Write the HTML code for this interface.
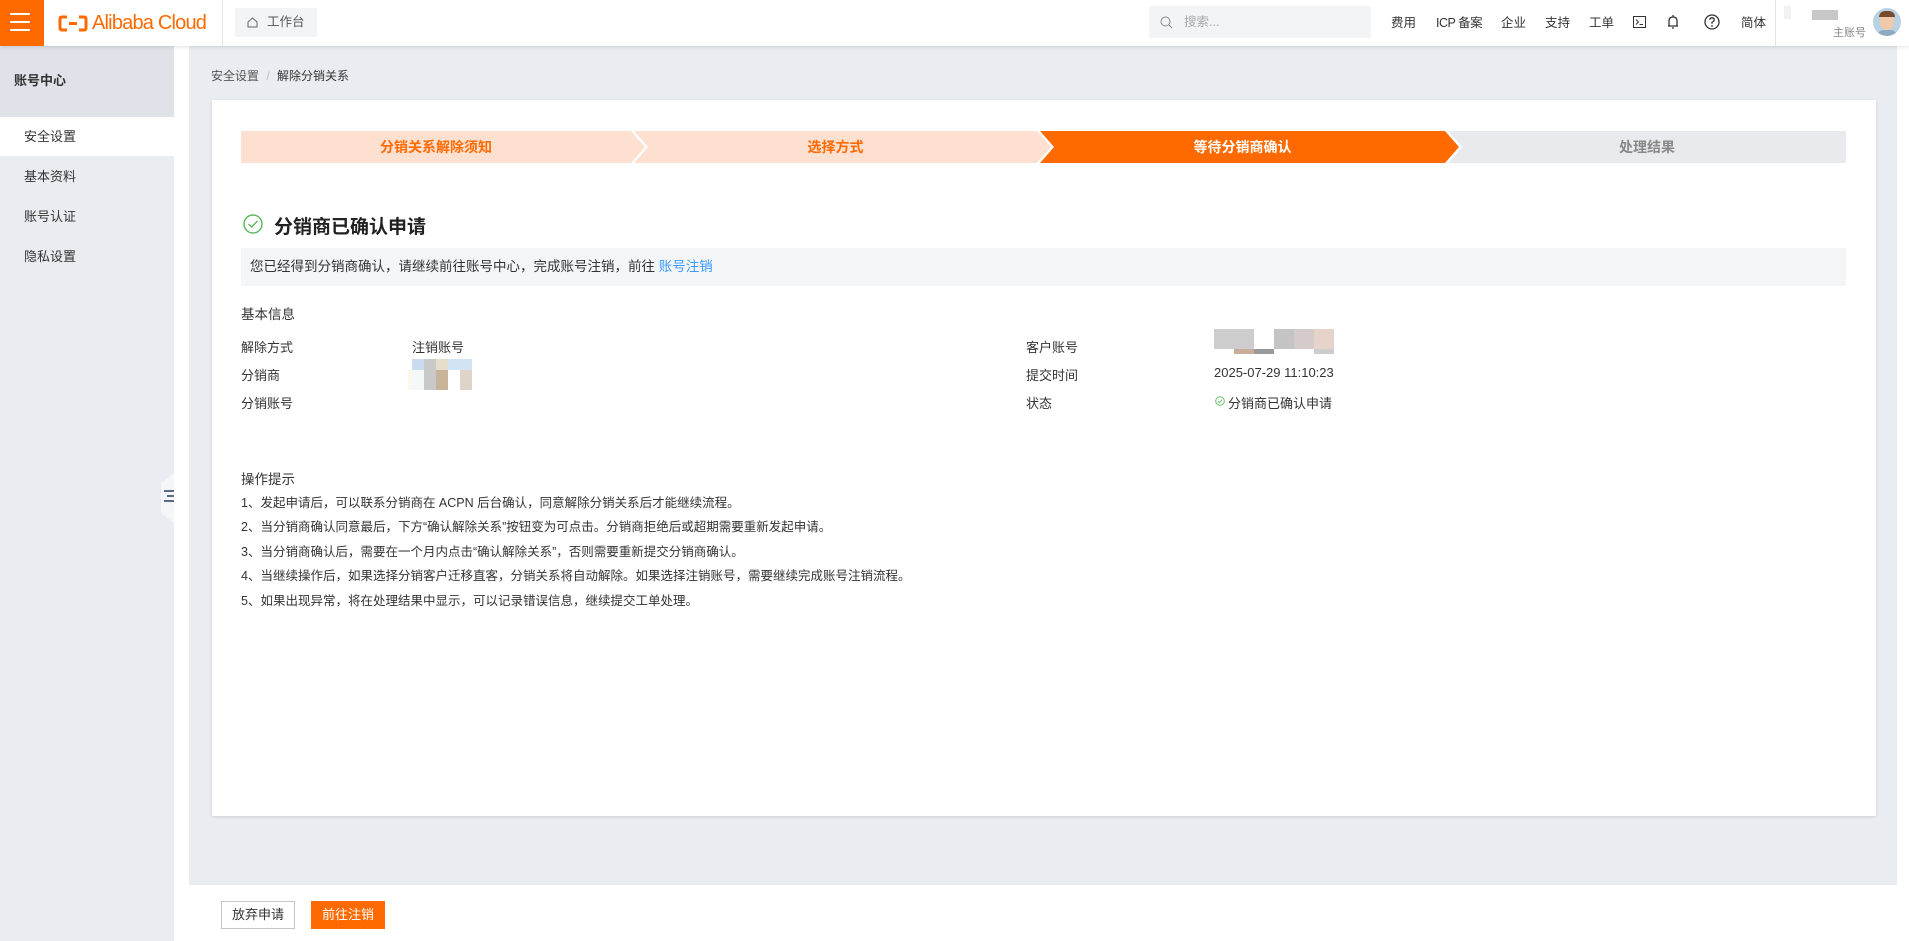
<!DOCTYPE html>
<html><head><meta charset="utf-8"><style>
*{box-sizing:border-box;margin:0;padding:0}
body{width:1909px;height:941px;overflow:hidden;position:relative;background:#fff;font-family:"Liberation Sans","Noto Sans CJK SC",sans-serif;color:#333;font-size:13px}
.a{position:absolute}
.hdr{left:0;top:0;width:1909px;height:46px;background:#fff;box-shadow:0 1px 4px rgba(0,0,0,.12);z-index:5}
.nav{top:0;height:46px;line-height:46px;font-size:12.5px;color:#333;white-space:nowrap}
.side{left:0;top:46px;width:174px;height:895px;background:#e9ecf1}
.sitem{left:0;width:174px;height:40px;line-height:40px;padding-left:24px;font-size:13px;color:#333}
.step{top:131px;height:32px;line-height:32px;text-align:center;font-size:14px;font-weight:bold}
.lbl{font-size:13px;color:#333}
.tip{left:241px;font-size:12.5px;color:#333}
</style></head><body>
<div class="a hdr">
 <div class="a" style="left:0;top:0;width:44px;height:46px;background:#ff6a00">
  <div class="a" style="left:10px;top:13px;width:20px;height:2px;background:#fff"></div>
  <div class="a" style="left:10px;top:21px;width:20px;height:2px;background:#fff"></div>
  <div class="a" style="left:10px;top:29px;width:20px;height:2px;background:#fff"></div>
 </div>
 <svg class="a" style="left:58px;top:15px" width="30" height="17" viewBox="0 0 30 17"><path d="M9 2H4Q2 2 2 4V13Q2 15 4 15H9M21 2H26Q28 2 28 4V13Q28 15 26 15H21M11 8.5H19" fill="none" stroke="#ff6a00" stroke-width="3"/></svg>
 <div class="a" style="left:92px;top:9px;font-size:20px;color:#ff6a00;letter-spacing:-0.8px;line-height:28px">Alibaba Cloud</div>
 <div class="a" style="left:222px;top:0;width:1px;height:46px;background:#e5e5e5"></div>
 <div class="a" style="left:235px;top:8px;width:82px;height:29px;background:#f3f4f6;font-size:12.5px;color:#555;line-height:29px;padding-left:32px">工作台</div>
 <svg class="a" style="left:247px;top:17px" width="11" height="11" viewBox="0 0 11 11"><path d="M1 5L5.5 1L10 5V10H1Z" fill="none" stroke="#666"/></svg>
 <div class="a" style="left:1149px;top:6px;width:222px;height:32px;background:#f3f4f6;color:#aaa;font-size:12.5px;line-height:32px;padding-left:35px">搜索...</div>
 <svg class="a" style="left:1160px;top:16px" width="13" height="13" viewBox="0 0 13 13"><circle cx="5.5" cy="5.5" r="4.5" fill="none" stroke="#888"/><path d="M9 9L12 12" stroke="#888"/></svg>
 <div class="a nav" style="left:1391px">费用</div>
 <div class="a nav" style="left:1436px;letter-spacing:-0.5px">ICP 备案</div>
 <div class="a nav" style="left:1501px">企业</div>
 <div class="a nav" style="left:1545px">支持</div>
 <div class="a nav" style="left:1589px">工单</div>
 <svg class="a" style="left:1633px;top:16px" width="13" height="12" viewBox="0 0 13 12"><rect x=".5" y=".5" width="12" height="11" fill="none" stroke="#333"/><path d="M3 3.5L5.5 6L3 8.5M6.5 8.5H10" fill="none" stroke="#333"/></svg>
 <svg class="a" style="left:1667px;top:14px" width="12" height="16" viewBox="0 0 12 16"><path d="M2 12V7Q2 3 6 3Q10 3 10 7V12ZM1 12H11M6 1V3M5 14H7" fill="none" stroke="#333" stroke-width="1.3"/></svg>
 <svg class="a" style="left:1704px;top:14px" width="16" height="16" viewBox="0 0 16 16"><circle cx="8" cy="8" r="7" fill="none" stroke="#333" stroke-width="1.3"/><path d="M5.8 6Q6 3.8 8 3.8Q10.2 3.8 10.2 5.8Q10.2 7.2 8 8.2V9.8" fill="none" stroke="#333" stroke-width="1.3"/><circle cx="8" cy="12" r=".9" fill="#333"/></svg>
 <div class="a nav" style="left:1741px">简体</div>
 <div class="a" style="left:1775px;top:0;width:1px;height:46px;background:#e5e5e5"></div>
 <div class="a" style="left:1784px;top:6px;width:7px;height:13px;background:#f2f2f2"></div>
 <div class="a" style="left:1812px;top:10px;width:26px;height:10px;background:#c8c8c8"></div>
 <div class="a" style="left:1833px;top:24px;font-size:11px;color:#888">主账号</div>
 <div class="a" style="left:1873px;top:8px;width:28px;height:28px;border-radius:50%;background:#b9d1e0;overflow:hidden">
  <div class="a" style="left:7px;top:5px;width:14px;height:17px;border-radius:50%;background:#f1c9a8"></div>
  <div class="a" style="left:6px;top:3px;width:16px;height:6px;border-radius:6px 6px 0 0;background:#7a4a2c"></div>
  <div class="a" style="left:3px;top:22px;width:22px;height:10px;border-radius:8px 8px 0 0;background:#8faac0"></div>
 </div>
</div>

<div class="a side">
 <div class="a" style="left:0;top:0;width:174px;height:71px;background:#dfe2e9;font-weight:bold;font-size:13px;line-height:40px;padding:15px 0 0 14px">账号中心</div>
 <div class="a sitem" style="top:71px;background:#fff;height:39px">安全设置</div>
 <div class="a sitem" style="top:111px">基本资料</div>
 <div class="a sitem" style="top:151px">账号认证</div>
 <div class="a sitem" style="top:191px">隐私设置</div>
</div>
<svg class="a" style="left:161px;top:473px" width="13" height="50" viewBox="0 0 13 50"><path d="M0 10L13 0V50L0 40Z" fill="#f5f6f8"/><path d="M3 18H13M6 23H13M3 28H13" stroke="#5a6a80" stroke-width="2"/></svg>

<div class="a" style="left:189px;top:46px;width:1708px;height:839px;background:#e9ecf0"></div>
<div class="a" style="left:211px;top:67px;font-size:12px;color:#555">安全设置 <span style="color:#bbb;margin:0 4px">/</span> <span style="color:#333">解除分销关系</span></div>

<div class="a" style="left:212px;top:100px;width:1664px;height:716px;background:#fff;box-shadow:0 1px 3px rgba(0,0,0,.12)"></div>

<svg class="a" style="left:241px;top:131px" width="1605" height="32" viewBox="0 0 1605 32">
 <path d="M0 0H390L404 16L390 32H0Z" fill="#fde0cf"/>
 <path d="M393 0H796L810 16L796 32H393L407 16Z" fill="#fde0cf"/>
 <path d="M799 0H1204L1218 16L1204 32H799L813 16Z" fill="#ff6a00"/>
 <path d="M1207 0H1605V32H1207L1221 16Z" fill="#e9eaed"/>
</svg>
<div class="a step" style="left:241px;width:390px;color:#ff6a00">分销关系解除须知</div>
<div class="a step" style="left:634px;width:403px;color:#ff6a00">选择方式</div>
<div class="a step" style="left:1040px;width:405px;color:#fff">等待分销商确认</div>
<div class="a step" style="left:1448px;width:398px;color:#888">处理结果</div>

<svg class="a" style="left:243px;top:214px" width="20" height="20" viewBox="0 0 20 20"><circle cx="10" cy="10" r="9" fill="none" stroke="#5cb85c" stroke-width="1.4"/><path d="M5.5 10L8.8 13L14.5 6.8" fill="none" stroke="#5cb85c" stroke-width="1.4"/></svg>
<div class="a" style="left:274px;top:212px;font-size:19px;font-weight:bold;color:#222">分销商已确认申请</div>
<div class="a" style="left:241px;top:248px;width:1605px;height:38px;background:#f4f5f7;font-size:13.5px;line-height:38px;padding-left:9px;color:#333">您已经得到分销商确认，请继续前往账号中心，完成账号注销，前往 <span style="color:#3c9cff">账号注销</span></div>

<div class="a lbl" style="left:241px;top:303px;font-size:13.5px">基本信息</div>
<div class="a lbl" style="left:241px;top:337px">解除方式</div>
<div class="a lbl" style="left:412px;top:337px">注销账号</div>
<div class="a lbl" style="left:241px;top:365px">分销商</div>
<div class="a lbl" style="left:241px;top:393px">分销账号</div>
<div class="a" style="left:408px;top:359px;width:106px;height:31px">
 <div class="a" style="left:0;top:11px;width:4px;height:20px;background:#fdf7ec"></div>
 <div class="a" style="left:4px;top:0;width:12px;height:11px;background:#c9dcef"></div>
 <div class="a" style="left:4px;top:11px;width:12px;height:20px;background:#f4f8f8"></div>
 <div class="a" style="left:16px;top:0;width:12px;height:31px;background:#c9c9c9"></div>
 <div class="a" style="left:28px;top:0;width:12px;height:11px;background:#e6ddcc"></div>
 <div class="a" style="left:28px;top:11px;width:12px;height:20px;background:#c8b599"></div>
 <div class="a" style="left:40px;top:0;width:24px;height:11px;background:#d2e3f3"></div>
 <div class="a" style="left:52px;top:11px;width:12px;height:20px;background:#ded4ca"></div>
</div>
<div class="a lbl" style="left:1026px;top:337px">客户账号</div>
<div class="a lbl" style="left:1026px;top:365px">提交时间</div>
<div class="a lbl" style="left:1026px;top:393px">状态</div>
<div class="a" style="left:1214px;top:329px;width:120px;height:25px">
 <div class="a" style="left:0;top:0;width:40px;height:20px;background:#cdcdcd"></div><div class="a" style="left:20px;top:20px;width:20px;height:5px;background:#c8ad9a"></div><div class="a" style="left:40px;top:20px;width:20px;height:5px;background:#999"></div><div class="a" style="left:60px;top:0;width:20px;height:20px;background:#c4c4c4"></div><div class="a" style="left:80px;top:0;width:20px;height:20px;background:#d5cbca"></div><div class="a" style="left:100px;top:0;width:20px;height:20px;background:#e6d4ca"></div><div class="a" style="left:100px;top:20px;width:20px;height:5px;background:#ccc"></div>
</div>
<div class="a lbl" style="left:1214px;top:365px">2025-07-29 11:10:23</div>
<svg class="a" style="left:1215px;top:396px" width="10" height="10" viewBox="0 0 10 10"><circle cx="5" cy="5" r="4.3" fill="none" stroke="#6cc06c"/><path d="M2.8 5L4.4 6.6L7.2 3.6" fill="none" stroke="#6cc06c"/></svg>
<div class="a lbl" style="left:1228px;top:393px">分销商已确认申请</div>

<div class="a lbl" style="left:241px;top:468px;font-size:13.5px">操作提示</div>
<div class="a tip" style="top:492px">1、发起申请后，可以联系分销商在 ACPN 后台确认，同意解除分销关系后才能继续流程。</div>
<div class="a tip" style="top:516px">2、当分销商确认同意最后，下方“确认解除关系”按钮变为可点击。分销商拒绝后或超期需要重新发起申请。</div>
<div class="a tip" style="top:541px">3、当分销商确认后，需要在一个月内点击“确认解除关系”，否则需要重新提交分销商确认。</div>
<div class="a tip" style="top:565px">4、当继续操作后，如果选择分销客户迁移直客，分销关系将自动解除。如果选择注销账号，需要继续完成账号注销流程。</div>
<div class="a tip" style="top:590px">5、如果出现异常，将在处理结果中显示，可以记录错误信息，继续提交工单处理。</div>

<div class="a" style="left:221px;top:901px;width:74px;height:28px;border:1px solid #c4c6cc;font-size:13px;line-height:26px;text-align:center;color:#333">放弃申请</div>
<div class="a" style="left:311px;top:901px;width:74px;height:28px;background:#ff6a00;font-size:13px;line-height:28px;text-align:center;color:#fff">前往注销</div>
</body></html>
